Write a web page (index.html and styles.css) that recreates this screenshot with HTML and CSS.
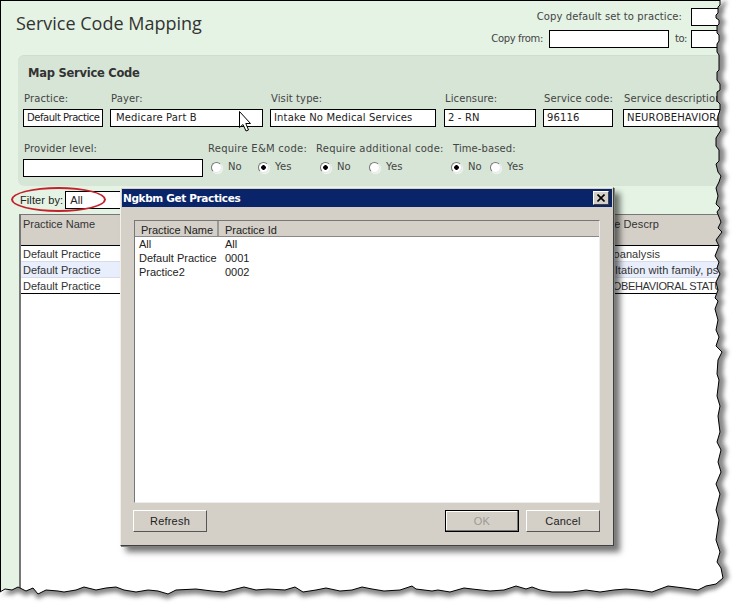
FILE: index.html
```html
<!DOCTYPE html>
<html lang="en">
<head>
<meta charset="utf-8">
<title>Service Code Mapping</title>
<link rel="stylesheet" href="styles.css">
</head>
<body>
<div class="stage">
  <div class="app">
    <header class="top">
      <h1 class="title">Service Code Mapping</h1>
      <div class="copy">
        <div class="copy-row"><span class="lbl">Copy default set to practice:</span><span class="box box-to gap-l"></span></div>
        <div class="copy-row"><span class="lbl tight">Copy from:</span><span class="box box-from"></span><span class="lbl to">to:</span><span class="box box-to"></span></div>
      </div>
    </header>
    <section class="panel">
      <h2 class="panel-title">Map Service Code</h2>
      <div class="row">
        <div class="field f-practice"><span class="lbl">Practice:</span><span class="box squeeze">Default Practice</span></div>
        <div class="field f-payer"><span class="lbl">Payer:</span><span class="box pad">Medicare Part B</span></div>
        <div class="field f-visit"><span class="lbl">Visit type:</span><span class="box">Intake No Medical Services</span></div>
        <div class="field f-lic"><span class="lbl">Licensure:</span><span class="box">2 - RN</span></div>
        <div class="field f-code"><span class="lbl">Service code:</span><span class="box">96116</span></div>
        <div class="field f-desc"><span class="lbl">Service description:</span><span class="box">NEUROBEHAVIORAL STATUS</span></div>
      </div>
      <div class="row row2">
        <div class="field f-prov"><span class="lbl">Provider level:</span><span class="box"></span></div>
        <div class="field f-em"><span class="lbl wide">Require E&amp;M code:</span>
          <div class="radios"><i class="radio"></i><span class="lbl r-no">No</span><i class="radio on"></i><span class="lbl">Yes</span></div></div>
        <div class="field f-add"><span class="lbl wide">Require additional code:</span>
          <div class="radios"><i class="radio on"></i><span class="lbl r-no">No</span><i class="radio"></i><span class="lbl">Yes</span></div></div>
        <div class="field f-time"><span class="lbl">Time-based:</span>
          <div class="radios"><i class="radio on"></i><span class="lbl r-no">No</span><i class="radio"></i><span class="lbl">Yes</span></div></div>
      </div>
    </section>
    <div class="filter"><span class="lbl">Filter by:</span><span class="box f-all">All</span></div>
    <section class="grid">
      <div class="ghead"><span class="c1">Practice Name</span><span class="c2">Service Descrp</span></div>
      <div class="grow"><span class="c1">Default Practice</span><span class="c2">Psychoanalysis</span></div>
      <div class="grow alt"><span class="c1">Default Practice</span><span class="c2">Consultation with family, psy</span></div>
      <div class="grow last"><span class="c1">Default Practice</span><span class="c2">NEUROBEHAVIORAL STATUS</span></div>
    </section>
  </div>

  <div class="ring"></div>

  <svg class="cursor" width="14" height="23" viewBox="0 0 14 23"><path d="M1.5 1.5V17.5L5 14.5L8 21L10.5 20L7.8 13.5H12.5Z" fill="#fff" stroke="#000"/></svg>

  <div class="dialog">
    <div class="titlebar"><span>Ngkbm Get Practices</span><span class="close"><svg width="8" height="8" viewBox="0 0 8 8"><path d="M0.5 0.5L7.5 7.5M7.5 0.5L0.5 7.5" stroke="#000" stroke-width="1.6"/></svg></span></div>
    <div class="list">
      <div class="lhead"><span class="lh1">Practice Name</span><span class="lh2">Practice Id</span></div>
      <div class="lrow"><span class="l1">All</span><span>All</span></div>
      <div class="lrow"><span class="l1">Default Practice</span><span>0001</span></div>
      <div class="lrow"><span class="l1">Practice2</span><span>0002</span></div>
    </div>
    <div class="actions">
      <button class="btn" type="button">Refresh</button>
      <span class="spacer"></span>
      <button class="btn ok" type="button">OK</button>
      <button class="btn" type="button">Cancel</button>
    </div>
  </div>

  <svg class="torn" width="738" height="607" viewBox="0 0 738 607">
    <defs>
      <path id="edge" d="M720 0V5L718 7V13L716 15V18L719 20V24L717 26V33L719 35V41L717 44V52L719 55V70L717 72V80L720 84V90L717 92V101L720 104V110L718 116V126L721 130L716 138V146L719 150V161L716 164L718 172L721 176L719 182L716 188L718 196L716 204L720 208L717 212L721 222L718 228L722 232L716 240L719 246L715 256L719 262L717 268L720 274L716 282L718 290L715 298L718 301L715 309L718 320L716 330L719 337L716 346L722 352L718 360L717 374L719 380L717 396L720 406L718 416L720 432L717 442L721 450L718 462L721 472L716 484L720 494L716 510L719 520L716 540L720 552L717 562L721 568L723 578L716 584L706 586L698 590L684 588L668 586L652 592L638 590L626 589L614 590L600 592L586 590L572 592L552 592L540 590L532 587L526 589L516 586L504 590L490 591L472 589L464 588L450 592L438 590L432 591L416 589L412 586L400 590L384 591L372 589L362 587L352 590L340 591L326 588L316 590L303 592L295 587L285 590L268 589L256 590L244 587L236 589L224 592L212 591L204 590L196 589L176 590L168 594L158 591L148 590L136 592L124 590L116 587L106 588L96 590L84 587L76 590L64 592L58 591L46 590L38 594L33 588L26 591L18 587L12 590L5 589L0 592"/>
      <filter id="blur" x="-5%" y="-5%" width="110%" height="110%"><feGaussianBlur stdDeviation="2.2"/></filter>
      <clipPath id="outside"><path clip-rule="evenodd" d="M0 0H738V607H0ZM0 0H720V5L718 7V13L716 15V18L719 20V24L717 26V33L719 35V41L717 44V52L719 55V70L717 72V80L720 84V90L717 92V101L720 104V110L718 116V126L721 130L716 138V146L719 150V161L716 164L718 172L721 176L719 182L716 188L718 196L716 204L720 208L717 212L721 222L718 228L722 232L716 240L719 246L715 256L719 262L717 268L720 274L716 282L718 290L715 298L718 301L715 309L718 320L716 330L719 337L716 346L722 352L718 360L717 374L719 380L717 396L720 406L718 416L720 432L717 442L721 450L718 462L721 472L716 484L720 494L716 510L719 520L716 540L720 552L717 562L721 568L723 578L716 584L706 586L698 590L684 588L668 586L652 592L638 590L626 589L614 590L600 592L586 590L572 592L552 592L540 590L532 587L526 589L516 586L504 590L490 591L472 589L464 588L450 592L438 590L432 591L416 589L412 586L400 590L384 591L372 589L362 587L352 590L340 591L326 588L316 590L303 592L295 587L285 590L268 589L256 590L244 587L236 589L224 592L212 591L204 590L196 589L176 590L168 594L158 591L148 590L136 592L124 590L116 587L106 588L96 590L84 587L76 590L64 592L58 591L46 590L38 594L33 588L26 591L18 587L12 590L5 589L0 592Z"/></clipPath>
    </defs>
    <path class="paper" fill-rule="evenodd" d="M0 0H738V607H0ZM0 0H720V5L718 7V13L716 15V18L719 20V24L717 26V33L719 35V41L717 44V52L719 55V70L717 72V80L720 84V90L717 92V101L720 104V110L718 116V126L721 130L716 138V146L719 150V161L716 164L718 172L721 176L719 182L716 188L718 196L716 204L720 208L717 212L721 222L718 228L722 232L716 240L719 246L715 256L719 262L717 268L720 274L716 282L718 290L715 298L718 301L715 309L718 320L716 330L719 337L716 346L722 352L718 360L717 374L719 380L717 396L720 406L718 416L720 432L717 442L721 450L718 462L721 472L716 484L720 494L716 510L719 520L716 540L720 552L717 562L721 568L723 578L716 584L706 586L698 590L684 588L668 586L652 592L638 590L626 589L614 590L600 592L586 590L572 592L552 592L540 590L532 587L526 589L516 586L504 590L490 591L472 589L464 588L450 592L438 590L432 591L416 589L412 586L400 590L384 591L372 589L362 587L352 590L340 591L326 588L316 590L303 592L295 587L285 590L268 589L256 590L244 587L236 589L224 592L212 591L204 590L196 589L176 590L168 594L158 591L148 590L136 592L124 590L116 587L106 588L96 590L84 587L76 590L64 592L58 591L46 590L38 594L33 588L26 591L18 587L12 590L5 589L0 592Z"/>
    <g clip-path="url(#outside)"><use href="#edge" class="shadow" filter="url(#blur)" transform="translate(0 5)"/><use href="#edge" class="shadow" filter="url(#blur)" transform="translate(6 0)"/></g>
    <use href="#edge" class="line"/>
  </svg>
</div>
</body>
</html>
```
FILE: styles.css
```css
* { box-sizing: border-box; }
html, body { margin: 0; padding: 0; background: #fff; }
.stage { position: relative; width: 738px; height: 607px; overflow: hidden; font-family: "DejaVu Sans", sans-serif; font-size: 10px; color: #333; }

.app { width: 780px; height: 607px; background: #e4f3e4; border-top: 1px solid #000; border-left: 1px solid #000; padding-left: 17px; display: flex; flex-direction: column; }
.top { height: 54px; width: 745px; display: flex; justify-content: space-between; margin-left: -2px; }
.title { margin: 10px 0 0 0; font: 400 18px/24px "Open Sans", sans-serif; color: #333; }
.copy { display: flex; flex-direction: column; align-items: flex-end; gap: 4px; padding-top: 7px; }
.copy-row { display: flex; align-items: center; gap: 6px; height: 18px; }
.box { display: block; height: 18px; background: #fff; border: 1px solid #000; font: 10px/16px "DejaVu Sans", sans-serif; color: #222; padding-left: 3px; white-space: nowrap; overflow: hidden; letter-spacing: .15px; }
.box-to { width: 70px; }
.gap-l { margin-left: 3px; }
.box-from { width: 120px; }
.lbl { font-size: 10px; line-height: 12px; color: #444; white-space: nowrap; letter-spacing: .1px; }
.lbl.tight { letter-spacing: -.35px; }
.lbl.wide { letter-spacing: .25px; }
.lbl.to { width: 10px; letter-spacing: -.5px; }
.squeeze { letter-spacing: -.45px; }

.panel { height: 131px; background: #d6e5d6; border-top: 1px solid #cfdccf; border-radius: 6px 0 0 6px; padding: 10px 0 0 5px; }
.panel-title { margin: 0 0 0 5px; font: 700 11.5px/14px "DejaVu Sans", sans-serif; letter-spacing: -.25px; color: #333; }
.row { display: flex; margin-top: 13px; }
.row2 { margin-top: 16px; }
.field { display: flex; flex-direction: column; gap: 4px; flex: none; }
.field .lbl { padding-left: 1px; }
.f-practice { width: 80px; margin-right: 7px; }
.f-payer { width: 153px; margin-right: 7px; }
.f-visit { width: 166px; margin-right: 8px; }
.f-lic { width: 92px; margin-right: 7px; }
.f-code { width: 70px; margin-right: 10px; }
.f-desc { width: 120px; }
.pad { padding-left: 5px; }
.f-prov { width: 180px; margin-right: 4px; }
.f-em { width: 108px; }
.f-add { width: 130px; }
.f-time { width: 90px; margin-left: 7px; }
.radios { display: flex; align-items: center; height: 14px; margin: 1px 0 0 4px; }
.f-add .radios { margin-left: 5px; }
.f-time .radios { margin-left: -1px; }
.radio { display: block; flex: none; width: 11px; height: 11px; border-radius: 50%; background: #fff; border: 1px solid; border-color: #777 #e8e8e8 #e8e8e8 #777; box-shadow: 1px 1px 1px #f4f4f4; margin-right: 6px; }
.radio.on { background: radial-gradient(circle, #000 0 2px, #fff 2.6px); }
.r-no { width: 30px; }
.f-add .r-no { width: 32px; }
.f-time .r-no { width: 22px; }
.field .radios .lbl { padding-left: 0; }

.filter { height: 28px; display: flex; align-items: center; gap: 2px; padding: 0 0 0 2px; }
.f-all { width: 70px; font-family: "Liberation Sans", sans-serif; font-size: 11px; padding-left: 4px; }
.filter .lbl { font: 11px "Liberation Sans", sans-serif; color: #222; }

.grid { flex: 1; margin-left: 1px; background: #fff; border-top: 1px solid #777; border-left: 2px solid #777; font: 11px/14px "Liberation Sans", sans-serif; color: #333; }
.ghead { height: 31px; background: #d4d0c8; border-bottom: 1px solid #000; padding-top: 2px; display: flex; }
.grow { height: 16px; display: flex; align-items: center; background: #fff; border-bottom: 1px solid #d6dceb; }
.grow.alt { background: #e8eefb; }
.grow.last { border-bottom: 1px solid #000; }
.c1 { width: 562px; padding-left: 2px; flex: none; white-space: nowrap; }
.c2 { white-space: nowrap; letter-spacing: .1px; }
.grow.last .c2 { letter-spacing: -.35px; }

.ring { position: absolute; left: 11px; top: 187px; width: 95px; height: 25px; border: 2px solid #c3222a; border-radius: 50%; }
.cursor { position: absolute; left: 238px; top: 110px; }

.dialog { position: absolute; left: 120px; top: 187px; width: 494px; height: 359px; background: #d4d0c8; border: 1px solid; border-color: #f2f0ec #404040 #404040 #f2f0ec; box-shadow: 1px 1px 0 #808080, 6px 6px 6px rgba(0,0,0,.55); padding: 1px; display: flex; flex-direction: column; font: 11px/14px "Liberation Sans", sans-serif; color: #222; }
.titlebar { height: 18px; flex: none; background: #0a246a; color: #fff; display: flex; justify-content: space-between; align-items: center; padding: 0 3px 0 1px; font: 700 10.5px "DejaVu Sans", sans-serif; letter-spacing: -.36px; }
.close { width: 16px; height: 14px; background: #d4d0c8; border: 1px solid; border-color: #fff #404040 #404040 #fff; display: flex; align-items: center; justify-content: center; }
.list { flex: none; height: 283px; margin: 13px 12px 0 12px; background: #fff; border: 1px solid; border-color: #777 #eee #eee #777; }
.lhead { height: 16px; background: #d4d0c8; display: flex; line-height: 18px; border-bottom: 1px solid #888; margin-bottom: 0; }
.lh1 { width: 84px; padding-left: 6px; border-right: 2px solid #999; flex: none; }
.lh2 { padding-left: 6px; }
.lrow { display: flex; height: 14px; }
.l1 { width: 90px; padding-left: 4px; flex: none; }
.actions { flex: none; display: flex; gap: 7px; margin: 7px 12px 0 11px; }
.spacer { flex: 1; }
.btn { width: 74px; height: 22px; padding: 0 0 1px; background: #d4d0c8; border: 1px solid; border-color: #fff #555 #555 #fff; font: 11px "Liberation Sans", sans-serif; letter-spacing: .2px; color: #222; }
.btn.ok { color: #9c9a94; border-color: #000; box-shadow: inset -1px -1px 0 #777, inset 1px 1px 0 #fff; }

.torn { position: absolute; left: 0; top: 0; }
.paper { fill: #fff; }
.shadow { fill: #8a8a8a; stroke: none; }
.line { fill: none; stroke: #000; stroke-width: 1; }
```
